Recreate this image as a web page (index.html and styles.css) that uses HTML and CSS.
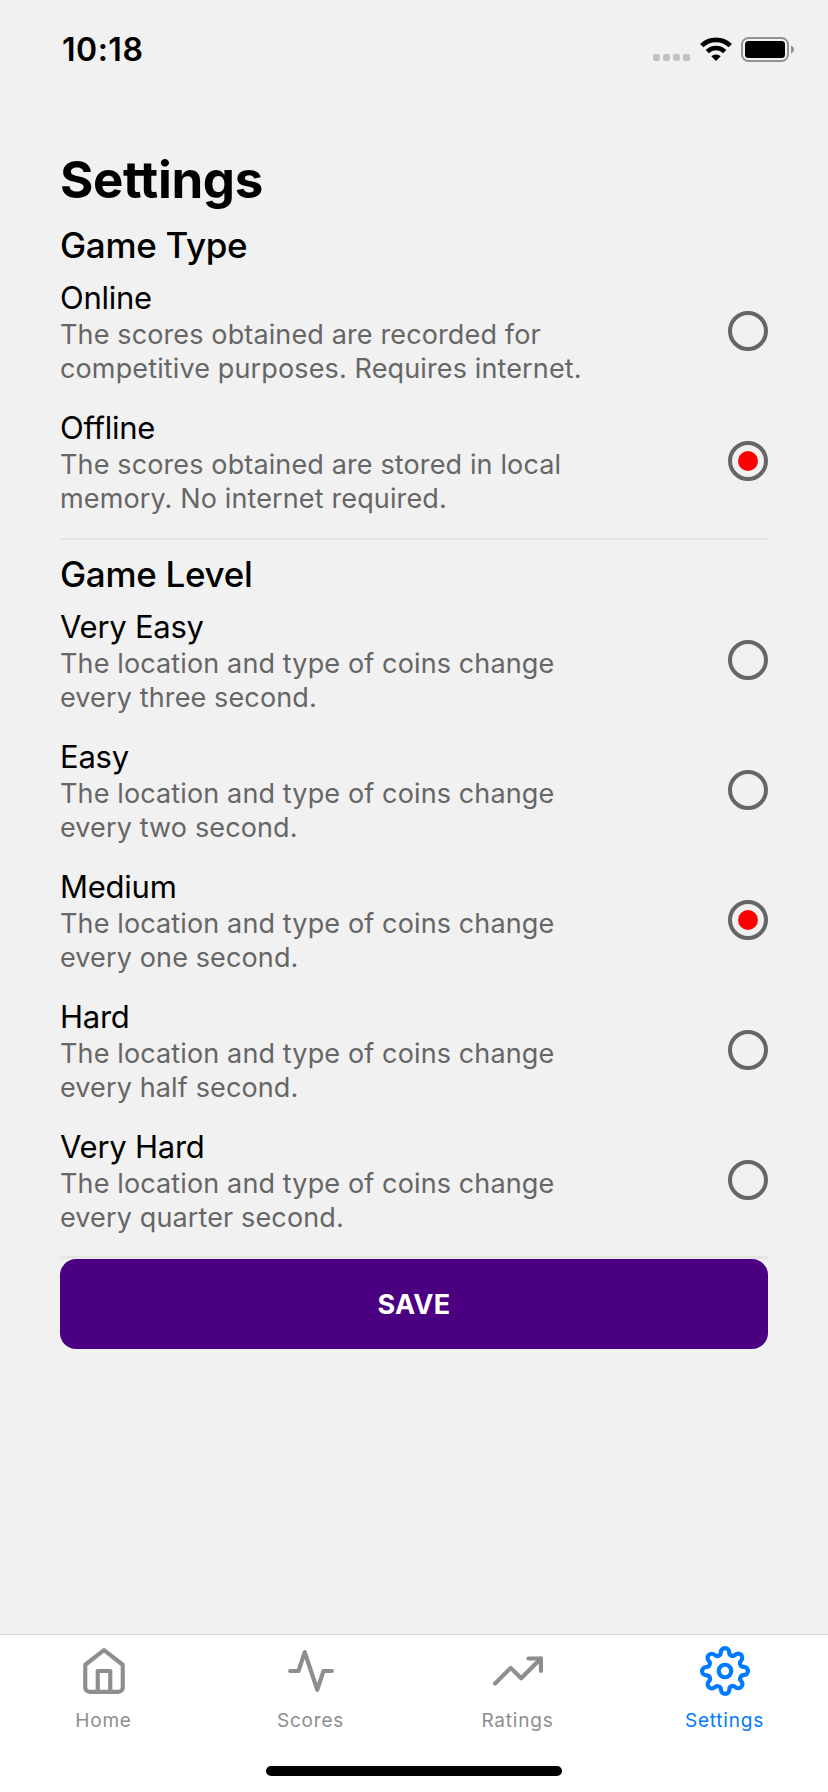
FILE: index.html
```html
<!DOCTYPE html>
<html lang="en">
<head>
<meta charset="utf-8">
<title>Settings</title>
<link rel="stylesheet" href="styles.css">
</head>
<body>
<div class="screen">
  <header class="status">
    <span class="time">10:18</span>
    <div class="indicators">
      <div class="signal"><i></i><i></i><i></i><i></i></div>
      <svg class="wifi" width="32" height="24" viewBox="0 0 32 24">
        <g fill="none" stroke="#000" stroke-width="4.6">
          <path d="M1.7 8.6a20.6 20.6 0 0 1 28.6 0"/>
          <path d="M7.3 14.6a12.4 12.4 0 0 1 17.4 0"/>
        </g>
        <path d="M16 24l-4.7-4.7a6.8 6.8 0 0 1 9.4 0z"/>
      </svg>
      <svg class="battery" width="54" height="26" viewBox="0 0 54 26">
        <rect x="1" y="1" width="46" height="23" rx="6.5" fill="none" stroke="#929292" stroke-width="2"/>
        <rect x="4" y="4" width="40" height="17" rx="3.5"/>
        <path d="M50 8.500c4 1.500 4 6.500 0 8z" fill="#929292"/>
      </svg>
    </div>
  </header>

  <main class="content">
    <h1 class="title">Settings</h1>
    <section class="group">
      <h2 class="group-title">Game Type</h2>
      <div class="option">
        <div class="text"><div class="name">Online</div><p class="desc">The scores obtained are recorded for<br>competitive purposes. Requires internet.</p></div>
        <span class="radio"></span>
      </div>
      <div class="option">
        <div class="text"><div class="name">Offline</div><p class="desc">The scores obtained are stored in local<br>memory. No internet required.</p></div>
        <span class="radio checked"></span>
      </div>
    </section>
    <section class="group levels">
      <h2 class="group-title">Game Level</h2>
      <div class="option">
        <div class="text"><div class="name">Very Easy</div><p class="desc">The location and type of coins change<br>every three second.</p></div>
        <span class="radio"></span>
      </div>
      <div class="option">
        <div class="text"><div class="name">Easy</div><p class="desc">The location and type of coins change<br>every two second.</p></div>
        <span class="radio"></span>
      </div>
      <div class="option">
        <div class="text"><div class="name">Medium</div><p class="desc">The location and type of coins change<br>every one second.</p></div>
        <span class="radio checked"></span>
      </div>
      <div class="option">
        <div class="text"><div class="name">Hard</div><p class="desc">The location and type of coins change<br>every half second.</p></div>
        <span class="radio"></span>
      </div>
      <div class="option">
        <div class="text"><div class="name">Very Hard</div><p class="desc">The location and type of coins change<br>every quarter second.</p></div>
        <span class="radio"></span>
      </div>
    </section>
    <button class="save">SAVE</button>
  </main>

  <footer class="tabbar">
    <nav class="tabs">
      <a class="tab">
        <svg class="icon" viewBox="0 0 24 24"><path d="M3 9l9-7 9 7v11a2 2 0 0 1-2 2H5a2 2 0 0 1-2-2z"/><path d="M9 22V12h6v10"/></svg>
        <span>Home</span>
      </a>
      <a class="tab">
        <svg class="icon" viewBox="0 0 24 24"><path d="M22 12h-4l-3 9L9 3l-3 9H2"/></svg>
        <span>Scores</span>
      </a>
      <a class="tab">
        <svg class="icon" viewBox="0 0 24 24"><path d="M23 6l-9.500 9.500-5-5L1 18"/><path d="M17 6h6v6"/></svg>
        <span>Ratings</span>
      </a>
      <a class="tab active">
        <svg class="icon" viewBox="0 0 24 24"><circle cx="12" cy="12" r="3"/><path d="M19.400 15a1.650 1.650 0 0 0 .33 1.820l.06.06a2 2 0 0 1 0 2.830 2 2 0 0 1-2.830 0l-.06-.06a1.650 1.650 0 0 0-1.820-.33 1.650 1.650 0 0 0-1 1.510V21a2 2 0 0 1-2 2 2 2 0 0 1-2-2v-.09A1.650 1.650 0 0 0 9 19.400a1.650 1.650 0 0 0-1.820.33l-.06.06a2 2 0 0 1-2.830 0 2 2 0 0 1 0-2.830l.06-.06a1.650 1.650 0 0 0 .33-1.820 1.650 1.650 0 0 0-1.510-1H3a2 2 0 0 1-2-2 2 2 0 0 1 2-2h.09A1.650 1.650 0 0 0 4.600 9a1.650 1.650 0 0 0-.33-1.820l-.06-.06a2 2 0 0 1 0-2.830 2 2 0 0 1 2.830 0l.06.06a1.650 1.650 0 0 0 1.820.33H9a1.650 1.650 0 0 0 1-1.510V3a2 2 0 0 1 2-2 2 2 0 0 1 2 2v.09a1.650 1.650 0 0 0 1 1.510 1.650 1.650 0 0 0 1.820-.33l.06-.06a2 2 0 0 1 2.830 0 2 2 0 0 1 0 2.830l-.06.06a1.650 1.650 0 0 0-.33 1.820V9a1.650 1.650 0 0 0 1.510 1H21a2 2 0 0 1 2 2 2 2 0 0 1-2 2h-.09a1.650 1.650 0 0 0-1.510 1z"/></svg>
        <span>Settings</span>
      </a>
    </nav>
    <div class="home-indicator"></div>
  </footer>
</div>
</body>
</html>
```
FILE: styles.css
```css
* { box-sizing: border-box; margin: 0; padding: 0; }
body { background: #f1f1f1; font-family: Inter, "Liberation Sans", sans-serif; color: #000; }
.screen { width: 828px; height: 1792px; display: flex; flex-direction: column; background: #f1f1f1; }
.status { height: 149px; padding: 30px 33px 0 62px; display: flex; justify-content: space-between; align-items: flex-start; }
.time { font-size: 32px; font-weight: 600; line-height: 40px; letter-spacing: .5px; }
.indicators { display: flex; align-items: flex-start; padding-top: 7px; }
.signal { display: flex; gap: 3px; padding-top: 17px; }
.signal i { width: 7px; height: 7px; border-radius: 2px; background: #c2c2c2; }
.wifi { margin: 0 9px 0 10px; }
.content { flex: 1; padding: 0 60px; }
.title { height: 62px; line-height: 61px; font-size: 51px; font-weight: 700; letter-spacing: -.35px; }
.group { padding: 12px 0 12px; border-bottom: 2px solid #e5e5e5; }
.levels { padding-bottom: 11px; border-bottom-width: 3px; }
.group-title { height: 43px; line-height: 44px; font-size: 35px; font-weight: 500; letter-spacing: -.3px; }
.option { height: 130px; display: flex; align-items: center; justify-content: space-between; }
.name { height: 38px; line-height: 41px; font-size: 31px; letter-spacing: -.25px; }
.desc { margin-bottom: -1px; padding-top: 3px; font-size: 27px; line-height: 34px; letter-spacing: .13px; color: #666; white-space: nowrap; }
.radio { width: 40px; height: 40px; border: 4px solid #666; border-radius: 50%; display: grid; place-items: center; }
.checked::after { content: ""; width: 20px; height: 20px; border-radius: 50%; background: #f00; }
.save { display: block; width: 100%; height: 90px; border: 0; border-radius: 16px; background: #4b0082; color: #fff; font: 700 27px Inter, sans-serif; letter-spacing: .3px; }
.tabbar { height: 158px; border-top: 1px solid #d8d8d8; background: #fff; display: flex; flex-direction: column; align-items: center; }
.tabs { width: 100%; height: 131px; display: grid; grid-template-columns: repeat(4, 1fr); }
.tab { padding-top: 11px; display: flex; flex-direction: column; align-items: center; gap: 12px; color: #8e8e8f; font-size: 19px; line-height: 26px; letter-spacing: .8px; }
.active { color: #007aff; }
.icon { width: 50px; height: 50px; fill: none; stroke: currentColor; stroke-width: 2; stroke-linecap: round; stroke-linejoin: round; }
.home-indicator { width: 296px; height: 10px; border-radius: 5px; background: #000; }
```
